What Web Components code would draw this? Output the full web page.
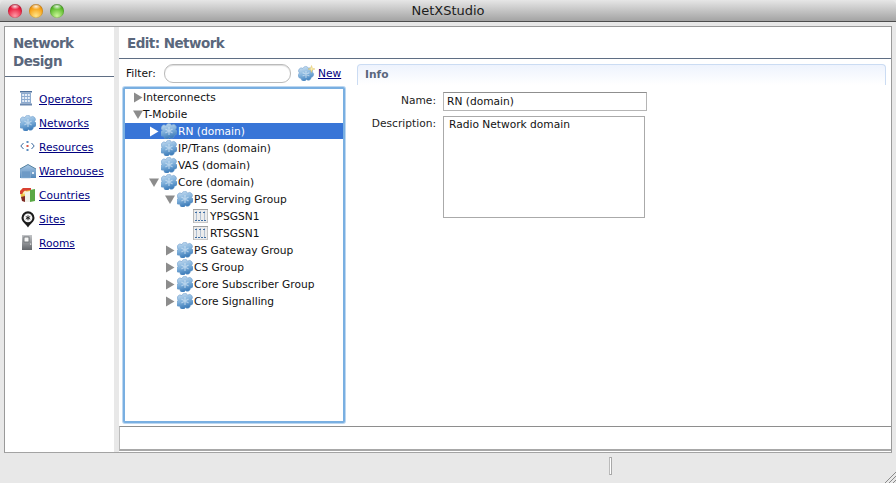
<!DOCTYPE html>
<html><head><meta charset="utf-8"><title>NetXStudio</title>
<style>
html,body{margin:0;padding:0;background:#fff;}
body{font:10.65px "DejaVu Sans",sans-serif;color:#111;width:896px;height:483px;overflow:hidden;}
</style></head>
<body>
<app-window>
  <nav-pane slot="nav" heading="Network Design">
    <nav-link icon="building">Operators</nav-link>
    <nav-link icon="net">Networks</nav-link>
    <nav-link icon="resource">Resources</nav-link>
    <nav-link icon="warehouse">Warehouses</nav-link>
    <nav-link icon="country">Countries</nav-link>
    <nav-link icon="site">Sites</nav-link>
    <nav-link icon="room">Rooms</nav-link>
  </nav-pane>
  <edit-pane slot="main" heading="Edit: Network">
    <tree-view slot="tree">
      <tree-row depth="0" arrow="right">Interconnects</tree-row>
      <tree-row depth="0" arrow="down">T-Mobile</tree-row>
      <tree-row depth="1" arrow="right" icon="net" selected>RN (domain)</tree-row>
      <tree-row depth="1" icon="net">IP/Trans (domain)</tree-row>
      <tree-row depth="1" icon="net">VAS (domain)</tree-row>
      <tree-row depth="1" arrow="down" icon="net">Core (domain)</tree-row>
      <tree-row depth="2" arrow="down" icon="net">PS Serving Group</tree-row>
      <tree-row depth="3" icon="node">YPSGSN1</tree-row>
      <tree-row depth="3" icon="node">RTSGSN1</tree-row>
      <tree-row depth="2" arrow="right" icon="net">PS Gateway Group</tree-row>
      <tree-row depth="2" arrow="right" icon="net">CS Group</tree-row>
      <tree-row depth="2" arrow="right" icon="net">Core Subscriber Group</tree-row>
      <tree-row depth="2" arrow="right" icon="net">Core Signalling</tree-row>
    </tree-view>
    <info-panel slot="info"></info-panel>
  </edit-pane>
</app-window>
<script>
const BLOB="M5 2.6A2.9 2.9 0 0 1 10.6 2.2A2.9 2.9 0 0 1 14.4 6.6A2.9 2.9 0 0 1 13.4 12.2A2.9 2.9 0 0 1 8.4 14.4A2.9 2.9 0 0 1 2.8 13.2A2.9 2.9 0 0 1 1.4 7.4A2.9 2.9 0 0 1 5 2.6Z";
const ICONS={
net:`<svg width="16" height="16" viewBox="0 0 16 16"><defs><linearGradient id="b" x1="0" y1="0" x2=".3" y2="1"><stop offset="0" stop-color="#cfe2f3"/><stop offset=".55" stop-color="#82b2dc"/><stop offset="1" stop-color="#3d7cb9"/></linearGradient></defs><path d="${BLOB}" fill="url(#b)" stroke="#6a9bcb" stroke-width=".5"/><path d="M8 4V12M4.4 6L11.6 10M11.6 6L4.4 10" stroke="#dcebf8" stroke-width="1.3" opacity=".6"/></svg>`,
netnew:`<svg width="18" height="16" viewBox="0 0 18 16"><defs><linearGradient id="n" x1="0" y1="0" x2=".3" y2="1"><stop offset="0" stop-color="#d4e5f4"/><stop offset=".55" stop-color="#8dbae0"/><stop offset="1" stop-color="#4a88c2"/></linearGradient></defs><path d="M5 3.4A2.9 2.9 0 0 1 10.4 3.1A2.9 2.9 0 0 1 14.2 7A2.9 2.9 0 0 1 13.2 12.4A2.9 2.9 0 0 1 8.4 14.6A2.9 2.9 0 0 1 3 13.4A2.9 2.9 0 0 1 1.5 8A2.9 2.9 0 0 1 5 3.4Z" fill="url(#n)" stroke="#6a9bcb" stroke-width=".5"/><path d="M8 6V13M4.6 7.6L11.4 11M11.4 7.6L4.6 11" stroke="#e4f0fa" stroke-width="1.2" opacity=".55"/><path d="M13.5 .5L14.3 3.2L17 4L14.3 4.8L13.5 7.5L12.7 4.8L10 4L12.7 3.2Z" fill="#fbeeb0" stroke="#d8b648" stroke-width=".4"/></svg>`,
node:`<svg width="16" height="16" viewBox="0 0 16 16"><rect x="0" y="1" width="15" height="14" fill="#ececec"/><rect x="0" y="1" width="15" height="1" fill="#a0a0a0"/><rect x="0" y="2" width="1" height="13" fill="#b8b8b8"/><rect x="14" y="2" width="1" height="13" fill="#c4c4c4"/><rect x="1" y="14" width="13" height="1" fill="#c8c8c8"/><g fill="#7f9dbf"><rect x="3" y="3" width="1" height="9" opacity=".55"/><rect x="7" y="3" width="1" height="9" opacity=".55"/><rect x="11" y="3" width="1" height="9" opacity=".55"/></g><g fill="#3f6ea3"><rect x="2" y="12" width="2" height="1"/><rect x="5" y="12" width="2" height="1"/><rect x="8" y="12" width="2" height="1"/><rect x="11" y="12" width="2" height="1"/><rect x="2" y="4" width="2" height="1"/><rect x="6" y="4" width="2" height="1"/><rect x="10" y="4" width="2" height="1"/></g></svg>`,
building:`<svg width="16" height="16" viewBox="0 0 16 16"><rect x="0" y="0" width="12" height="1.5" fill="#4f719c"/><rect x="1" y="1.5" width="10" height="11" fill="#8dabd0"/><g fill="#e6eef8"><rect x="2.2" y="3" width="2" height="2"/><rect x="5" y="3" width="2" height="2"/><rect x="7.8" y="3" width="2" height="2"/><rect x="2.2" y="6" width="2" height="2"/><rect x="5" y="6" width="2" height="2"/><rect x="7.8" y="6" width="2" height="2"/><rect x="2.2" y="9" width="2" height="2"/><rect x="5" y="9" width="2" height="2"/><rect x="7.8" y="9" width="2" height="2"/></g><rect x="0" y="12.5" width="12" height="2" fill="#6a88b0"/></svg>`,
resource:`<svg width="16" height="16" viewBox="0 0 16 16"><path d="M3.5 4L.8 7L3.5 10M11.5 4L14.2 7L11.5 10" fill="none" stroke="#3a689e" stroke-width="1"/><rect x="6.5" y="2" width="2" height="2" fill="#5d8dc0"/><rect x="6.5" y="6" width="2" height="2" fill="#d9584a"/><rect x="6.5" y="10" width="2" height="2" fill="#5d8dc0"/></svg>`,
warehouse:`<svg width="16" height="16" viewBox="0 0 16 16"><defs><linearGradient id="w" x1="0" y1="0" x2="0" y2="1"><stop offset="0" stop-color="#a8c8e6"/><stop offset="1" stop-color="#5488ba"/></linearGradient></defs><path d="M0 6L8 1.5L16 6V15H0Z" fill="url(#w)"/><path d="M0 6L8 1.5L16 6" fill="none" stroke="#55819f"/><rect x="1.5" y="8" width="9" height="7" fill="#6d9ac6" stroke="#8fb4d6" stroke-width=".5"/><rect x="12" y="9" width="2" height="2" fill="#dce9f5"/></svg>`,
country:`<svg width="16" height="16" viewBox="0 0 16 16"><path d="M0 4L3 1L11 1L10 10L1 10Z" fill="#ecc84a"/><path d="M0 4L3 1L11 1L11 3L4 4L2 7L0 7Z" fill="#d94032"/><path d="M1 10L5 9L5 15L2 14Z" fill="#7e2b24"/><path d="M5 5L10 4L10 15L5 15Z" fill="#f1f3ea"/><path d="M10 3L15 2L15 14L10 15Z" fill="#5aa844"/><path d="M3 6L5 3.5L7 5L5 6L4 8Z" fill="#f7edc6"/></svg>`,
site:`<svg width="16" height="17" viewBox="0 0 16 17"><path d="M8 16.5C6 13 1.5 11 1.5 6.8A6.5 6.5 0 0 1 14.5 6.8C14.5 11 10 13 8 16.5Z" fill="#1b1b1b"/><circle cx="8" cy="6.8" r="4.4" fill="#f4f4f4"/><path d="M8 4.3V9.3M5.8 5.5L10.2 8.1M10.2 5.5L5.8 8.1" stroke="#222" stroke-width="1"/></svg>`,
room:`<svg width="16" height="16" viewBox="0 0 16 16"><defs><linearGradient id="r" x1="0" y1="0" x2="0" y2="1"><stop offset="0" stop-color="#c4c6c9"/><stop offset="1" stop-color="#63666a"/></linearGradient></defs><rect x="2" y="0" width="10" height="15" fill="url(#r)"/><rect x="4" y="2" width="5" height="5" fill="#f4f4f4" stroke="#62666a" stroke-width=".8"/><rect x="10" y="8.5" width="1.2" height="1.2" fill="#ececec"/></svg>`
};
const def=(name,html)=>{
  customElements.define(name,class extends HTMLElement{
    constructor(){super();this.attachShadow({mode:'open'});}
    connectedCallback(){this.shadowRoot.innerHTML=typeof html==='function'?html(this):html;}
  });
};
const HEAD='font:bold 13.5px/18px "DejaVu Sans",sans-serif;letter-spacing:-.55px;color:#5a677c;border-bottom:1px solid #5f6e84;';
def('app-window',`<style>
:host{display:flex;flex-direction:column;width:896px;height:483px;background:#e8e8e8;}
.bar{height:21px;border-bottom:1px solid #4d4d4d;border-radius:5px 5px 0 0;background:linear-gradient(#e6e6e6,#a3a3a3);display:flex;align-items:center;position:relative;justify-content:center;}
.lights{position:absolute;left:8px;top:4px;display:flex;gap:7px;}
.l{width:14px;height:14px;border-radius:50%;box-sizing:border-box;box-shadow:inset 0 0 1px rgba(0,0,0,.7);}
.r{background:radial-gradient(ellipse 5px 3px at 50% 18%,rgba(255,255,255,.85),transparent),radial-gradient(circle at 50% 85%,#ff9aa6,#ea1c3c 60%,#a8102a);}
.y{background:radial-gradient(ellipse 5px 3px at 50% 18%,rgba(255,255,255,.85),transparent),radial-gradient(circle at 50% 85%,#ffe68a,#f7a012 60%,#c06f08);}
.g{background:radial-gradient(ellipse 5px 3px at 50% 18%,rgba(255,255,255,.85),transparent),radial-gradient(circle at 50% 85%,#cdf79a,#5cbc2c 60%,#2f8018);}
.t{font-size:13px;color:#1c1c1c;}
.body{flex:1;display:flex;flex-direction:column;}
.panel{margin:4px 4px 0 4px;height:425px;border:1px solid #999;border-bottom-color:#a3a3a3;display:grid;grid-template-columns:109px 1fr;column-gap:5px;}
.foot{flex:1;display:flex;}
.div{margin:4px 0 0 609px;width:1px;height:16px;background:#fff;border:1px solid #a8a8a8;border-left-color:#bbb;}
.grip{margin:auto 0 0 auto;display:block;}
</style>
<div class="bar"><div class="lights"><span class="l r"></span><span class="l y"></span><span class="l g"></span></div><span class="t">NetXStudio</span></div>
<div class="body"><div class="panel"><slot name="nav"></slot><slot name="main"></slot></div>
<div class="foot"><div class="div"></div><svg class="grip" width="11" height="11" viewBox="0 0 11 11"><path d="M0 11L11 0M4 11L11 4M8 11L11 8" stroke="#8a8a8a" stroke-width="1"/></svg></div></div>`);
def('nav-pane',h=>`<style>
:host{display:block;background:#fff;}
h2{margin:0;padding:7px 0 6px 8px;${HEAD}}
.list{display:flex;flex-direction:column;padding-top:10px;}
</style><h2>Network<br>Design</h2><div class="list"><slot></slot></div>`);
def('nav-link',h=>`<style>
:host{display:flex;align-items:center;height:24px;padding-left:15px;}
.i{width:16px;height:16px;display:flex;margin-right:3px;}
a{color:#00007f;text-decoration:underline;padding-right:2px;}
</style><span class="i">${ICONS[h.getAttribute('icon')]}</span><a><slot></slot></a>`);
def('edit-pane',h=>`<style>
:host{display:flex;flex-direction:column;background:#fff;min-width:0;}
h2{margin:0;height:32px;box-sizing:border-box;padding:7px 0 0 8px;${HEAD}}
.main{height:367px;display:grid;grid-template-columns:222px 1fr;column-gap:12px;padding:0 5px 0 4px;}
.left{display:flex;flex-direction:column;min-height:0;}
.filter{height:28px;display:flex;align-items:center;padding:0 0 0 3px;}
.filter label{width:35px;padding-top:1px;}
input{width:127px;height:19px;box-sizing:border-box;border:1px solid #bbb;border-radius:9px;padding:0 8px;background:#fff;outline:0;margin:0 7px 0 3px;box-shadow:inset 0 1px 1px #ddd;}
.new{display:flex;margin-right:2px;}
a{color:#00007f;text-decoration:underline;padding-top:1px;}
.status{border-top:1px solid #8e8e8e;border-bottom:2px solid #a8a8a8;border-left:1px solid #bbb;box-sizing:border-box;height:25px;}
</style><h2>${h.getAttribute('heading')}</h2>
<div class="main"><div class="left"><div class="filter"><label>Filter:</label><input type="text" aria-label="Filter"><span class="new">${ICONS.netnew}</span><a>New</a></div><slot name="tree"></slot></div><slot name="info"></slot></div>
<div class="status"></div>`);
def('tree-view',`<style>
:host{display:block;margin:0 0 3px 0;flex:1;border:2px solid #79afe1;box-shadow:0 0 0 1px #bcd7f1;border-radius:2px;background:#fff;}
</style><slot></slot>`);
def('tree-row',h=>{
  const d=+h.getAttribute('depth'),ar=h.getAttribute('arrow'),ic=h.getAttribute('icon'),sel=h.hasAttribute('selected');
  const c=sel?'#fff':'#8c8c8c';
  const a=ar==='right'?`<svg width="10" height="11" viewBox="0 0 10 11"><path d="M1 .5L9.5 5.5L1 10.5Z" fill="${c}"/></svg>`:ar==='down'?`<svg width="10" height="11" viewBox="0 0 10 11"><path d="M0 1.5H10L5 10Z" fill="${c}"/></svg>`:'';
  return `<style>
:host{display:flex;align-items:center;height:16px;margin-bottom:1px;padding-left:${8+16*d}px;${sel?'background:#3875d7;color:#fff;':''}white-space:nowrap;}
.a{width:10px;display:flex;}
.i{display:flex;margin:0 1px 0 2px;}
</style><span class="a">${a}</span>${ic?`<span class="i">${ICONS[ic]}</span>`:''}<span><slot></slot></span>`;
});
def('info-panel',`<style>
:host{display:block;padding-top:5px;}
.tab{height:21px;box-sizing:border-box;border:1px solid #cbdcf3;border-bottom:0;border-radius:4px 4px 0 0;background:linear-gradient(#eef3fd,#fff);padding:2px 0 0 7px;font-weight:bold;color:#5a677c;line-height:15px;}
.form{display:grid;grid-template-columns:79px 204px;column-gap:7px;row-gap:5px;padding-top:7px;}
.lab{text-align:right;padding-top:1px;line-height:15px;color:#222;}
.f{box-sizing:border-box;border:1px solid #b5b5b5;border-top-color:#8f8f8f;height:19px;line-height:17px;padding-left:3px;color:#111;}
.ta{height:102px;width:202px;border-color:#aaa;padding:0 0 0 5px;line-height:15px;}
</style><div class="tab">Info</div>
<div class="form"><div class="lab">Name:</div><div class="f">RN (domain)</div><div class="lab" style="padding-top:0">Description:</div><div class="f ta">Radio Network domain</div></div>`);
</script>
</body></html>
